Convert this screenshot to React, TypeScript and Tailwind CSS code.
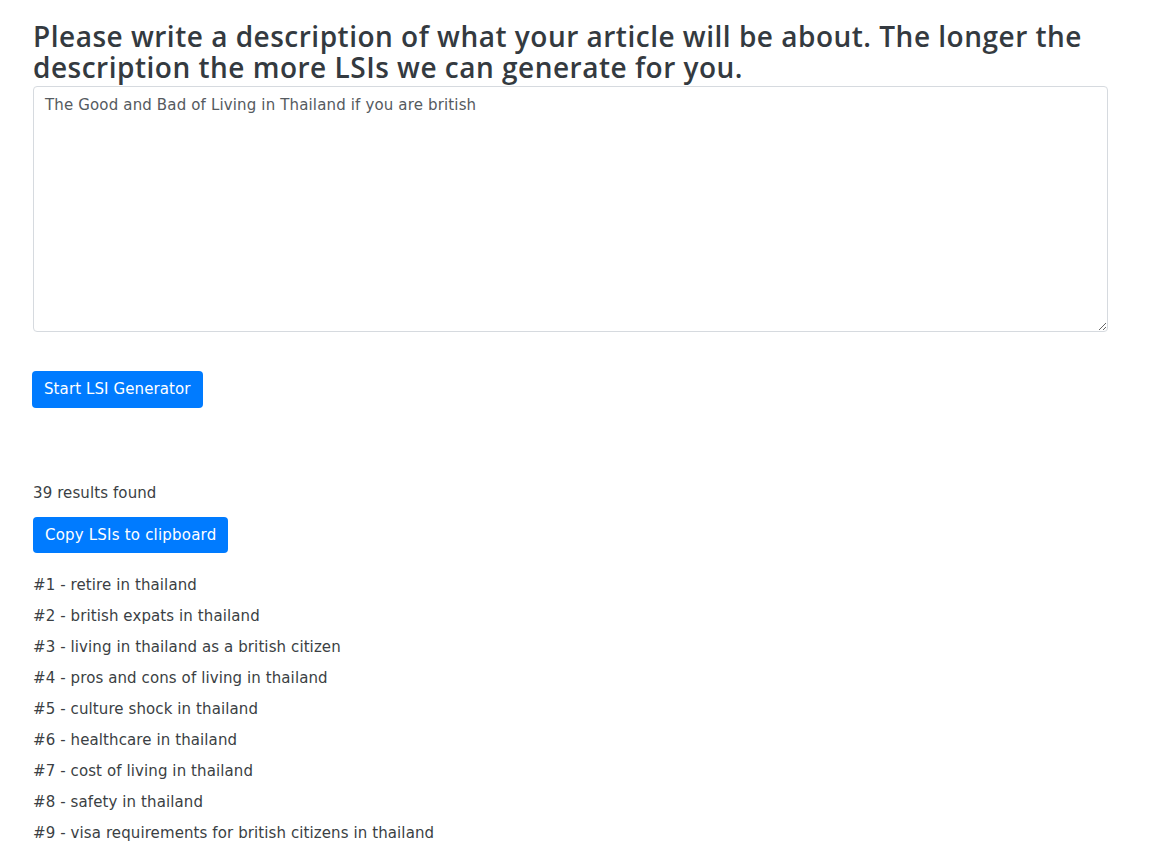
import { useState } from "react";

const lsis = [
  "retire in thailand",
  "british expats in thailand",
  "living in thailand as a british citizen",
  "pros and cons of living in thailand",
  "culture shock in thailand",
  "healthcare in thailand",
  "cost of living in thailand",
  "safety in thailand",
  "visa requirements for british citizens in thailand",
];

export default function App() {
  const [desc, setDesc] = useState("The Good and Bad of Living in Thailand if you are british");

  return (
    <div className="min-h-[843px] bg-white pl-[33px] pr-[50px] pt-[21px] font-['DejaVu_Sans',sans-serif] tracking-[0.1px] text-[#3b3f44]">
      <h3 className="font-['Open_Sans',sans-serif] text-[28px] font-semibold leading-[31px] tracking-[0.5px] text-[#343a40]">
        Please write a description of what your article will be about. The longer the description the more LSIs we can generate for you.
      </h3>
      <textarea
        className="mt-[3px] block h-[246px] w-full rounded-[4px] border border-[#d6dadf] px-[11px] py-[6px] text-[15px] leading-[24px] tracking-[0.15px] text-[#555a60] outline-none"
        value={desc}
        onChange={(e) => setDesc(e.target.value)}
      />
      <button className="-ml-px mt-[39px] h-[37px] rounded-[4px] bg-[#007bff] px-[12px] text-[15px] text-white">
        Start LSI Generator
      </button>
      <p className="mt-[75px] text-[15px] leading-[20px]">39 results found</p>
      <button className="mt-[14px] h-[36px] rounded-[4px] bg-[#007bff] px-[12px] text-[15px] tracking-[0.2px] text-white">
        Copy LSIs to clipboard
      </button>
      <ul className="mt-[17px]">
        {lsis.map((l, i) => (
          <li key={i} className="h-[31px] text-[15px] leading-[31px]">
            #{i + 1} - {l}
          </li>
        ))}
      </ul>
    </div>
  );
}
